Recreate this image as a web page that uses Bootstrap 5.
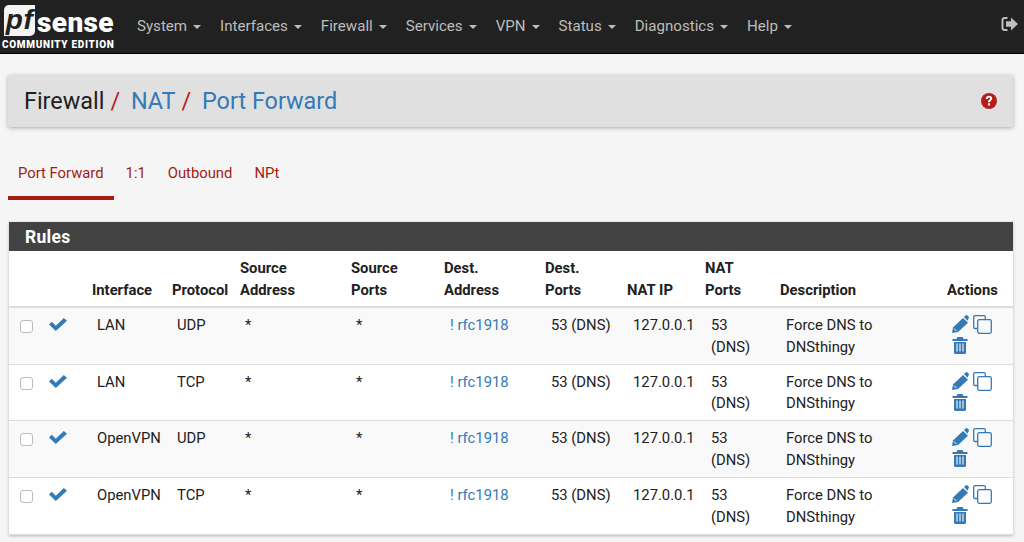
<!DOCTYPE html>
<html lang="en"><head><meta charset="utf-8"><title>Port Forward</title>
<link href="https://cdn.jsdelivr.net/npm/bootstrap@5.3.0/dist/css/bootstrap.min.css" rel="stylesheet">
<style>
html,body{height:542px;overflow:hidden}
body{background:#f5f5f5;font-family:Roboto,sans-serif;font-size:14.8px;color:#212121}
.topbar{height:54px;background:#212121;border-bottom:1px solid #000;padding:0 6px 0 2px}
.logo-wrap{width:114px;height:50px;color:#fff;margin-top:5px}
.logo-top{height:34px;padding-left:2px;gap:2px}
.logo-pf{background:#f4f4f4;color:#212121;font:italic 700 28px/29px "Liberation Sans",sans-serif;width:31px;height:31px;border-radius:5px 0 5px 0;text-align:center;letter-spacing:.5px}
.logo-sense{font:900 28px/34px Roboto,sans-serif;margin-top:1px;letter-spacing:.4px}
.logo-sub{font:900 10px/12px Roboto,sans-serif;letter-spacing:.68px;white-space:nowrap;margin-top:.3px}
.menu-row{margin-left:21px;gap:19px}
.menu-item{color:#bdbdbd;font-size:15.1px;text-decoration:none;white-space:nowrap}
.caret-mark{display:inline-block;width:0;height:0;margin-left:6px;vertical-align:2px;border-top:4px solid #bdbdbd;border-left:4px solid transparent;border-right:4px solid transparent}
.crumb-panel{margin:21px 11px 0 8px;height:52px;background:#e0e0e0;border-radius:2px;box-shadow:0 1px 4px rgba(0,0,0,.3);padding:0 16px 0 16px}
.crumb-text{font-size:23.4px;line-height:52px;margin:0;font-weight:400;color:#212121}
.crumb-text a{color:#337ab7;text-decoration:none}
.crumb-sep{color:#b71c1c;margin:0 5px 0 6px}
.tab-row{margin:28px 0 0 8px;height:45px;gap:2px}
.tab-link{color:#a51c10;text-decoration:none;padding:10px 10px 0;display:block;font-size:14.8px;line-height:17px;height:45px}
.tab-link.is-on{border-bottom:4px solid #a51c10;padding-top:10px}
.rules-panel{margin:22px 11px 0 9px;background:#fff;box-shadow:0 1px 3px rgba(0,0,0,.25)}
.rules-head{background:#424242;color:#fff;font-size:17.5px;font-weight:700;height:29px;line-height:30px;padding-left:16px;letter-spacing:.3px}
.rules-table{table-layout:fixed;width:1004px;margin:0;border-collapse:collapse;font-size:14.8px}
.rules-table th{padding:7px 5px 5px;font-weight:700;line-height:21.5px;vertical-align:bottom;border-bottom:2px solid #ddd;height:56px;color:#212121}
.rules-table td{padding:7px 10px 5.7px;line-height:21.5px;vertical-align:top;border-bottom:1px solid #ddd;height:56px;color:#212121}
.rules-table td:nth-child(n+7){padding-left:11px}
.rules-table td.pad-s{padding-left:5px;padding-right:0}
.rules-table tr.odd-row td{background:#f9f9f9}
.rules-table a{color:#337ab7;text-decoration:none}
.box-mark{width:13px;height:13px;border:1px solid #bbb;border-radius:3px;background:#fff;display:block;margin:5px 0 0 1px}
.icon-row svg{display:inline-block;vertical-align:top}
.action-cell{line-height:0!important}
.trash-line{margin-top:3px}
.check-mark{display:block;margin-top:3px}
</style></head><body>
<nav class="topbar d-flex align-items-start">
 <div class="logo-wrap flex-shrink-0">
  <div class="logo-top d-flex"><span class="logo-pf">pf</span><span class="logo-sense">sense</span></div>
  <div class="logo-sub">COMMUNITY EDITION</div>
 </div>
 <div class="menu-row d-flex align-items-center flex-grow-1" style="height:53px">
  <a class="menu-item" href="#">System<i class="caret-mark"></i></a>
  <a class="menu-item" href="#">Interfaces<i class="caret-mark"></i></a>
  <a class="menu-item" href="#">Firewall<i class="caret-mark"></i></a>
  <a class="menu-item" href="#">Services<i class="caret-mark"></i></a>
  <a class="menu-item" href="#">VPN<i class="caret-mark"></i></a>
  <a class="menu-item" href="#">Status<i class="caret-mark"></i></a>
  <a class="menu-item" href="#">Diagnostics<i class="caret-mark"></i></a>
  <a class="menu-item" href="#">Help<i class="caret-mark"></i></a>
 </div>
 <svg class="mt-3" width="17" height="16" viewBox="0 0 17 16" fill="#bdbdbd"><path d="M6.500 1H3.500A3 3 0 0 0 .5 4v8a3 3 0 0 0 3 3h3v-2h-3a1 1 0 0 1-1-1V4a1 1 0 0 1 1-1h3z"/><path d="M10 1.500l7 6.500-7 6.500v-3.700H5V5.200h5z"/></svg>
</nav>
<div class="crumb-panel d-flex justify-content-between align-items-center">
 <h1 class="crumb-text">Firewall<span class="crumb-sep">/</span> <a href="#">NAT</a><span class="crumb-sep">/</span> <a href="#">Port Forward</a></h1>
 <svg width="16" height="16" viewBox="0 0 16 16"><circle cx="8" cy="8" r="8" fill="#b71c1c"/><path d="M4.800 6c0-4.300 6.400-4.300 6.400-.5 0 2-2.200 2-2.200 3.700H7C7 6.800 9 7 9 5.500c0-1.300-2-1.200-2.300.5z" fill="#fff"/><rect x="7" y="10.300" width="2" height="2.200" fill="#fff"/></svg>
</div>
<div class="tab-row d-flex">
 <a class="tab-link is-on" href="#">Port Forward</a>
 <a class="tab-link" href="#">1:1</a>
 <a class="tab-link" href="#">Outbound</a>
 <a class="tab-link" href="#">NPt</a>
</div>
<div class="rules-panel">
 <div class="rules-head">Rules</div>
 <table class="rules-table" id="rt">
  <colgroup><col style="width:35px"><col style="width:43px"><col style="width:80px"><col style="width:68px"><col style="width:111px"><col style="width:93px"><col style="width:101px"><col style="width:82px"><col style="width:78px"><col style="width:75px"><col style="width:167px"><col style="width:71px"></colgroup>
  <thead><tr><th></th><th></th><th>Interface</th><th>Protocol</th><th>Source<br>Address</th><th>Source<br>Ports</th><th>Dest.<br>Address</th><th>Dest.<br>Ports</th><th>NAT IP</th><th>NAT<br>Ports</th><th>Description</th><th>Actions</th></tr></thead>
  <tbody id="rb"></tbody>
 </table>
</div>
<script>
const rows=[["LAN","UDP"],["LAN","TCP"],["OpenVPN","UDP"],["OpenVPN","TCP"]];
const check='<svg class="check-mark" width="18" height="13" viewBox="0 0 18 13" fill="#337ab7"><path d="M0 6.500 2.800 3.800l4 4L14.800 0 18 2.800 6.800 13z"/></svg>';
const pencil='<svg width="17" height="18" viewBox="0 0 17 18" fill="#337ab7"><path d="M0 18l1-5.500L11 3l5 4.800-10 9.200z"/><path d="M12 2l1.500-1.500a1.500 1.500 0 0 1 2 0l1 1a1.500 1.500 0 0 1 0 2L15.500 5.800z"/><path d="M2 13.500l2.500 2.500" stroke="#f9f9f9" stroke-width="1"/></svg>';
const clone='<svg width="19" height="19" viewBox="0 0 19 19" fill="none" stroke="#337ab7" stroke-width="1.300"><path d="M4 13.500H2a1.300 1.300 0 0 1-1.300-1.300V2A1.300 1.300 0 0 1 2 .7h9A1.300 1.300 0 0 1 12.300 2v2"/><rect x="4.700" y="4.700" width="13.600" height="13.600" rx="1.500"/></svg>';
const trash='<svg width="16" height="17" viewBox="0 0 15 17" fill="#337ab7"><path d="M5 0h5l1 2h4v2H0V2h4z"/><path d="M1.500 5h12v10.500a1.500 1.500 0 0 1-1.500 1.500H3a1.500 1.500 0 0 1-1.500-1.500z"/><path d="M4.500 6.500v8M7.500 6.500v8M10.500 6.500v8" stroke="#f9f9f9" stroke-width="1.100"/></svg>';
document.getElementById('rb').innerHTML=rows.map((r,i)=>`<tr class="${i%2==0?'odd-row':''}">
<td class="pad-s" style="padding-left:10px"><span class="box-mark"></span></td><td class="pad-s">${check}</td>
<td>${r[0]}</td><td>${r[1]}</td><td>*</td><td>*</td><td><a href="#">! rfc1918</a></td><td>53 (DNS)</td><td style="white-space:nowrap;padding-right:0">127.0.0.1</td><td>53 (DNS)</td><td>Force DNS to DNSthingy</td>
<td class="action-cell icon-row" style="padding:7px 0 0 10px">${pencil}<span class="ms-1">${clone}</span><div class="trash-line">${trash}</div></td></tr>`).join('');
</script>
<script src="https://cdn.jsdelivr.net/npm/bootstrap@5.3.0/dist/js/bootstrap.bundle.min.js"></script>
</body></html>
